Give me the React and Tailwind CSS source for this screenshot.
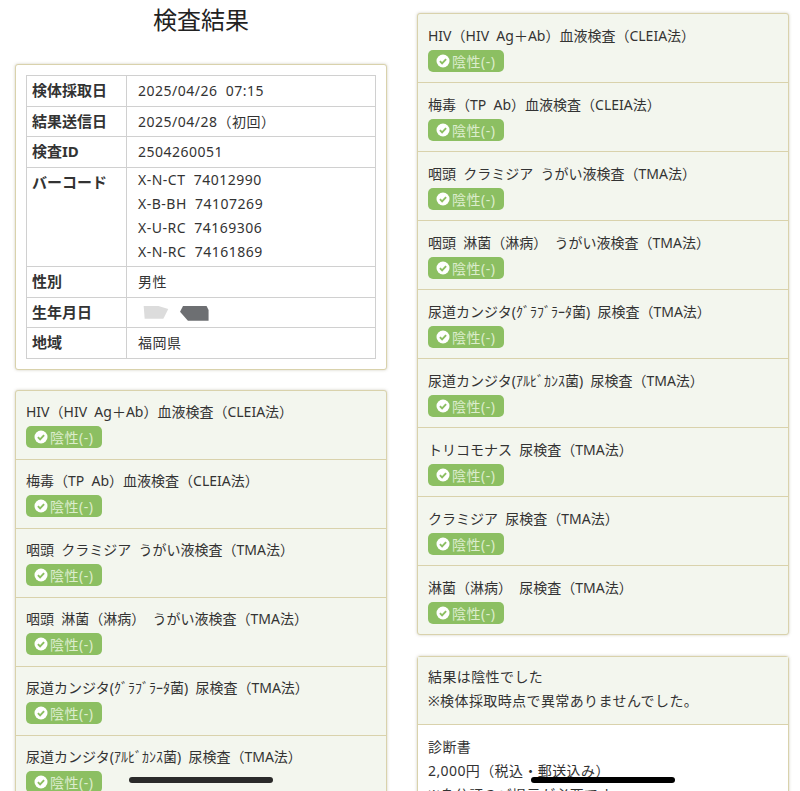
import React from "react";

const info = [
  { label: "検体採取日", value: ["2025/04/26  07:15"] },
  { label: "結果送信日", value: ["2025/04/28（初回）"] },
  { label: "検査ID", value: ["2504260051"] },
  { label: "バーコード", value: ["X-N-CT  74012990", "X-B-BH  74107269", "X-U-RC  74169306", "X-N-RC  74161869"] },
  { label: "性別", value: ["男性"] },
  { label: "生年月日", masked: true },
  { label: "地域", value: ["福岡県"] },
];

const tests = [
  "HIV（HIV  Ag＋Ab）血液検査（CLEIA法）",
  "梅毒（TP  Ab）血液検査（CLEIA法）",
  "咽頭  クラミジア  うがい液検査（TMA法）",
  "咽頭  淋菌（淋病）  うがい液検査（TMA法）",
  "尿道カンジタ(ｸﾞﾗﾌﾞﾗｰﾀ菌)  尿検査（TMA法）",
  "尿道カンジタ(ｱﾙﾋﾞｶﾝｽ菌)  尿検査（TMA法）",
  "トリコモナス  尿検査（TMA法）",
  "クラミジア  尿検査（TMA法）",
  "淋菌（淋病）  尿検査（TMA法）",
];

const Card = ({ className = "", children }) => (
  <div className={`rounded-[3px] border border-[#d9d2ac] shadow-[0_0_3px_rgba(120,110,70,0.35)] ${className}`}>
    {children}
  </div>
);

const CheckBadge = () => (
  <svg width="14" height="14" viewBox="0 0 14 14" className="shrink-0">
    <circle cx="7" cy="7" r="6.5" fill="#ffffff" />
    <path d="M3.9 7.2l2.2 2.2 4-4.2" fill="none" stroke="#8cbf62" strokeWidth="1.9" />
  </svg>
);

const TestList = ({ items, tight }) => (
  <Card className="bg-[#f3f6ee]">
    {items.map((name, i) => (
      <div
        key={name}
        className={`px-[10px] ${tight ? "pt-[11px]" : "pt-[12px]"} ${i > 0 ? "h-[69px] border-t border-[#d9d2ac]" : "h-[68px]"}`}
      >
        <div className="whitespace-pre text-[14px] leading-[20px]">{name}</div>
        <div className="mt-[4px] flex h-[22px] w-[76px] items-center rounded-[5px] bg-[#8cbf62] pl-[8px] text-[14px] tracking-[0.5px] text-[#dcedcd]">
          <CheckBadge />
          <span className="ml-[2px] whitespace-nowrap">陰性(-)</span>
        </div>
      </div>
    ))}
  </Card>
);

export default function App() {
  return (
    <div className="relative h-[791px] w-[800px] overflow-hidden bg-white text-[#333333] [font-family:'Noto_Sans','Noto_Sans_CJK_JP',sans-serif]">
      <div className="flex items-start gap-[30px] pl-[15px]">
        {/* left column */}
        <div className="w-[372px]">
          <h1 className="mt-[5px] text-center text-[24px] font-normal leading-[30px] text-[#222222]">検査結果</h1>
          <Card className="mt-[29px] bg-white p-[10px]">
            <div className="border-t border-l border-[#d0d0d0] text-[14px]">
              {info.map((row) => (
                <div key={row.label} className="flex border-r border-b border-[#d0d0d0]">
                  <div className="w-[100px] shrink-0 border-r border-[#d0d0d0] py-[5px] pl-[5px] text-[15px] font-bold leading-[19.67px]">
                    {row.label}
                  </div>
                  <div className={`px-[11px] tracking-[0.5px] ${row.value?.length > 1 ? "pb-[2px]" : "py-[5px]"}`}>
                    {row.masked ? (
                      <svg width="90" height="19.67" className="block" viewBox="0 0 90 20">
                        <path d="M5 3h15l10 3-5 10H6z" fill="#dcdcdc" />
                        <path d="M45 3h24l2 4v11H50l-8-9z" fill="#6d6f72" />
                      </svg>
                    ) : (
                      row.value.map((v) => (
                        <div key={v} className={row.value.length > 1 ? "whitespace-pre leading-[24px]" : "whitespace-pre leading-[19.67px]"}>
                          {v}
                        </div>
                      ))
                    )}
                  </div>
                </div>
              ))}
            </div>
          </Card>
          <div className="mt-[20px]">
            <TestList items={tests} tight />
          </div>
        </div>

        {/* right column */}
        <div className="mt-[13px] w-[372px]">
          <TestList items={tests} />
          <Card className="mt-[21px] text-[14px] tracking-[0.4px]">
            <div className="border-b border-[#d9d2ac] bg-[#f3f6ee] px-[10px] pb-[11px] pt-[8px] leading-[24px]">
              <div>結果は陰性でした</div>
              <div>※検体採取時点で異常ありませんでした。</div>
            </div>
            <div className="bg-white px-[10px] pt-[10px] leading-[24px]">
              <div>診断書</div>
              <div>2,000円（税込・郵送込み）</div>
              <div>※身分証のご提示が必要です</div>
            </div>
          </Card>
        </div>
      </div>

      {/* screenshot redaction strokes */}
      <div className="absolute left-[129px] top-[777px] h-[6px] w-[144px] rounded-full bg-[#2a2a2a]" />
      <div className="absolute left-[531px] top-[777px] h-[6px] w-[144px] rounded-full bg-black" />
    </div>
  );
}
